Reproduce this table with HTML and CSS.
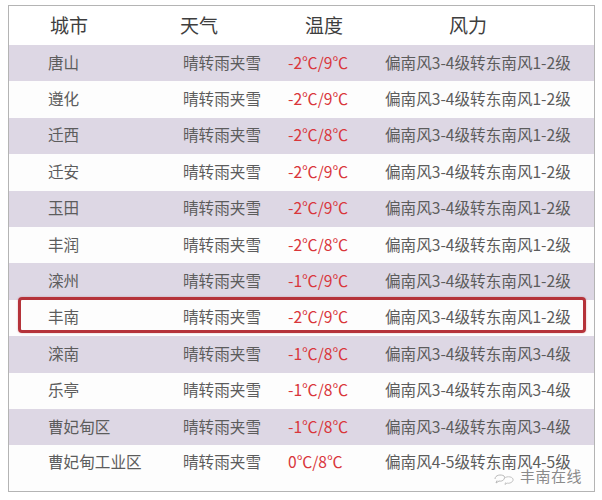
FILE: index.html
```html
<!DOCTYPE html>
<html lang="zh">
<head>
<meta charset="utf-8">
<link rel="stylesheet" href="styles.css">
</head>
<body>
<div class="frame">
  <div class="head">
    <div class="h-city">城市</div>
    <div class="h-weather">天气</div>
    <div class="h-temp">温度</div>
    <div class="h-wind">风力</div>
  </div>
  <div class="row alt"><div>唐山</div><div>晴转雨夹雪</div><div class="t">-2℃/9℃</div><div>偏南风3-4级转东南风1-2级</div></div>
  <div class="row"><div>遵化</div><div>晴转雨夹雪</div><div class="t">-2℃/9℃</div><div>偏南风3-4级转东南风1-2级</div></div>
  <div class="row alt"><div>迁西</div><div>晴转雨夹雪</div><div class="t">-2℃/8℃</div><div>偏南风3-4级转东南风1-2级</div></div>
  <div class="row"><div>迁安</div><div>晴转雨夹雪</div><div class="t">-2℃/9℃</div><div>偏南风3-4级转东南风1-2级</div></div>
  <div class="row alt"><div>玉田</div><div>晴转雨夹雪</div><div class="t">-2℃/9℃</div><div>偏南风3-4级转东南风1-2级</div></div>
  <div class="row"><div>丰润</div><div>晴转雨夹雪</div><div class="t">-2℃/8℃</div><div>偏南风3-4级转东南风1-2级</div></div>
  <div class="row alt"><div>滦州</div><div>晴转雨夹雪</div><div class="t">-1℃/9℃</div><div>偏南风3-4级转东南风1-2级</div></div>
  <div class="row mark"><div>丰南</div><div>晴转雨夹雪</div><div class="t">-2℃/9℃</div><div>偏南风3-4级转东南风1-2级</div><span class="box"></span></div>
  <div class="row alt"><div>滦南</div><div>晴转雨夹雪</div><div class="t">-1℃/8℃</div><div>偏南风3-4级转东南风3-4级</div></div>
  <div class="row"><div>乐亭</div><div>晴转雨夹雪</div><div class="t">-1℃/8℃</div><div>偏南风3-4级转东南风3-4级</div></div>
  <div class="row alt"><div>曹妃甸区</div><div>晴转雨夹雪</div><div class="t">-1℃/8℃</div><div>偏南风3-4级转东南风3-4级</div></div>
  <div class="row last"><div>曹妃甸工业区</div><div>晴转雨夹雪</div><div class="t">0℃/8℃</div><div>偏南风4-5级转东南风4-5级</div></div>
  <div class="wm">
    <svg class="wm-icon" width="24" height="14" viewBox="0 0 24 14">
      <path d="M3 7 C3 3 9 2 12 4 C14 6 11 10 7 9 L4 11 L5 8.5" fill="none" stroke="#b8b8b8" stroke-width="1"/>
      <path d="M12 7 C13 4 20 4 21 7 C22 10 17 12 15 11 L13 12.5 L13.5 10.5" fill="none" stroke="#c4c4c4" stroke-width="1"/>
    </svg>
    <span class="wm-text">丰南在线</span>
  </div>
</div>
</body>
</html>
```

FILE: styles.css
```css
html, body {
  margin: 0;
  padding: 0;
  background: #ffffff;
}

body {
  font-family: "Noto Sans CJK SC", "Noto Sans", sans-serif;
  color: #5c5c5c;
}

.frame {
  position: relative;
  margin: 5px 0 0 8px;
  width: 587px;
  height: 487px;
  border: 1px solid #b4b4b4;
  background: #fdfdfd;
  box-sizing: border-box;
}

.head,
.row {
  display: grid;
  grid-template-columns: 135px 105px 97px 1fr;
  padding-left: 39px;
  align-items: center;
  box-sizing: border-box;
}

.head {
  height: 39px;
  padding-bottom: 2px;
  font-size: 19px;
  color: #3e3e3e;
  background: #ffffff;
}

.h-city { padding-left: 2px; }
.h-weather { margin-left: -3px; }
.h-temp { padding-left: 17px; }
.h-wind { padding-left: 64px; }

.row {
  position: relative;
  height: 36.4px;
  padding-bottom: 3px;
  font-size: 15.6px;
  white-space: nowrap;
}

.row.alt {
  background: #ddd7e4;
}

.row .t {
  color: #d9363b;
}

.row.last {
  height: 46px;
  align-items: start;
  padding-top: 5px;
  padding-bottom: 0;
}

.box {
  position: absolute;
  left: 9px;
  right: 8px;
  top: -3px;
  height: 36px;
  border: 3px solid #b5333a;
  border-radius: 4px;
  box-sizing: border-box;
  box-shadow: 0 0 2px rgba(181, 51, 58, 0.4);
}

.wm {
  position: absolute;
  right: 12px;
  bottom: 5px;
  display: flex;
  align-items: center;
  gap: 4px;
}

.wm-icon {
  display: block;
  margin-top: 6px;
}

.wm-text {
  font-size: 15px;
  color: #8a8a8a;
  text-shadow: 0 0 2px #ffffff, 0 0 2px #ffffff;
  letter-spacing: 0.5px;
}
```
